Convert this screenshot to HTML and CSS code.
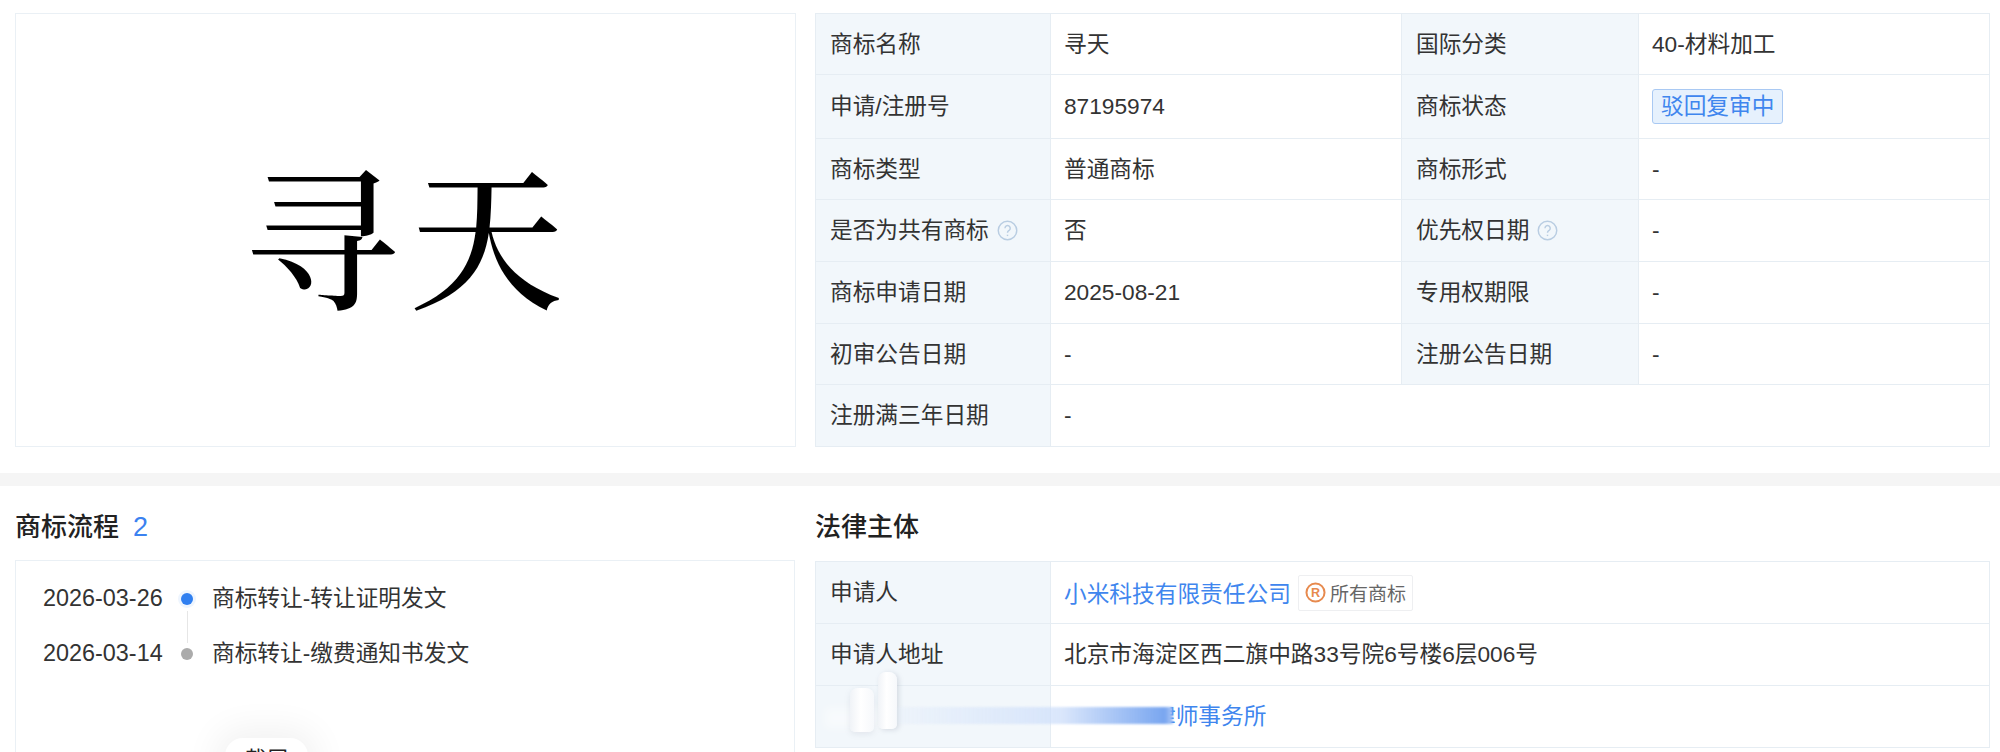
FILE: index.html
```html
<!DOCTYPE html>
<html lang="zh-CN">
<head>
<meta charset="utf-8">
<title>商标详情</title>
<link rel="stylesheet" href="styles.css">
</head>
<body>
<div class="page">
  <section class="top">
    <div class="logo-box"><span class="logo-text">寻天</span></div>
    <table class="info">
      <colgroup><col class="c-label"><col class="c-value"><col class="c-label2"><col></colgroup>
      <tr class="r-short"><th>商标名称</th><td>寻天</td><th>国际分类</th><td>40-材料加工</td></tr>
      <tr class="r-tall"><th>申请/注册号</th><td class="num">87195974</td><th>商标状态</th><td class="num"><span class="status">驳回复审中</span></td></tr>
      <tr class="r-short"><th>商标类型</th><td>普通商标</td><th>商标形式</th><td class="num">-</td></tr>
      <tr><th>是否为共有商标<svg class="help" viewBox="0 0 20 20"><circle cx="10" cy="10" r="8.8"/><path d="M7.6 7.8a2.5 2.5 0 1 1 3.9 2.1c-1 .6-1.5 1.1-1.5 2.3"/><path d="M10 14v1.3"/></svg></th><td>否</td><th>优先权日期<svg class="help" viewBox="0 0 20 20"><circle cx="10" cy="10" r="8.8"/><path d="M7.6 7.8a2.5 2.5 0 1 1 3.9 2.1c-1 .6-1.5 1.1-1.5 2.3"/><path d="M10 14v1.3"/></svg></th><td class="num">-</td></tr>
      <tr><th>商标申请日期</th><td class="num">2025-08-21</td><th>专用权期限</th><td class="num">-</td></tr>
      <tr class="r-short"><th>初审公告日期</th><td class="num">-</td><th>注册公告日期</th><td class="num">-</td></tr>
      <tr><th>注册满三年日期</th><td class="num" colspan="3">-</td></tr>
    </table>
  </section>

  <div class="band"></div>

  <section class="bottom">
    <div class="flow">
      <h2 class="title">商标流程<span class="count">2</span></h2>
      <div class="flow-box">
        <div class="step">
          <span class="date">2026-03-26</span><span class="dot dot-on"></span><span class="step-text">商标转让-转让证明发文</span>
        </div>
        <div class="step">
          <span class="date">2026-03-14</span><span class="dot"></span><span class="step-text">商标转让-缴费通知书发文</span>
        </div>
      </div>
    </div>
    <div class="legal">
      <h2 class="title">法律主体</h2>
      <table class="info">
        <colgroup><col class="c-label"><col></colgroup>
        <tr><th>申请人</th><td><span class="owner"><a class="link">小米科技有限责任公司</a><span class="all"><svg class="r-mark" viewBox="0 0 20 20"><circle cx="10" cy="10" r="8.6"/><text x="10" y="14.4" text-anchor="middle">R</text></svg>所有商标</span></span></td></tr>
        <tr><th>申请人地址</th><td>北京市海淀区西二旗中路33号院6号楼6层006号</td></tr>
        <tr><th></th><td><a class="link agent">律师事务所</a></td></tr>
      </table>
    </div>
  </section>

  <div class="veil">
    <span class="haze"></span>
    <span class="cyl cyl-a"></span>
    <span class="cyl cyl-b"></span>
    <span class="cover"></span>
    <span class="beam"></span>
  </div>
  <div class="shot">截屏</div>
</div>
</body>
</html>
```
FILE: styles.css
```css
* { box-sizing: border-box; }
html, body { margin: 0; height: 752px; overflow: hidden; background: #fff; }
body {
  font-family: "Liberation Sans", "Noto Sans CJK SC", sans-serif;
  font-size: 22.7px;
  color: #333;
}
.page { position: relative; width: 2000px; height: 752px; overflow: hidden; }

.top { display: flex; gap: 19px; padding: 13px 10px 0 15px; }
.logo-box {
  flex: 0 0 781px;
  height: 434px;
  border: 1px solid #eaf0f5;
  display: flex;
  align-items: center;
  justify-content: center;
  padding: 0 0 0 8px;
}
.logo-text {
  font-family: "Noto Serif CJK SC", "Noto Sans CJK SC", serif;
  font-size: 154px;
  font-weight: 500;
  line-height: 1;
  letter-spacing: 11px;
  color: #000;
  position: relative;
  top: 2px;
}

.info { flex: 1; width: 100%; border-collapse: collapse; table-layout: fixed; }
.info th, .info td {
  border: 1px solid #e6edf3;
  height: 62px;
  padding: 0 14px 4px;
  font-weight: 400;
  text-align: left;
  white-space: nowrap;
}
.info td { padding-left: 13px; }
.info td.num { padding-bottom: 0; }
.info th { background: #f2f7fb; color: #333; }
.info .r-short th, .info .r-short td { height: 61px; }
.info .r-tall th, .info .r-tall td { height: 64px; }
.c-label { width: 235px; }
.c-value { width: 351px; }
.c-label2 { width: 237px; }

.help {
  width: 21px;
  height: 21px;
  margin-left: 8px;
  vertical-align: -3px;
  fill: none;
  stroke: #b9cde2;
  stroke-width: 1.4;
}
.status {
  display: inline-block;
  height: 35px;
  line-height: 33px;
  padding: 0 8px;
  background: #e6f1fd;
  border: 1px solid #a9c9f3;
  border-radius: 3px;
  color: #3f86ee;
}

.band { height: 13px; margin-top: 26px; background: #f5f5f5; }

.bottom { display: flex; gap: 20px; padding: 0 10px 0 15px; }
.flow { flex: 0 0 780px; }
.legal { flex: 1; }
.title {
  margin: 0;
  padding-top: 23px;
  height: 74px;
  font-size: 26px;
  line-height: 36px;
  font-weight: 500;
  color: #222;
}
.count { margin-left: 14px; color: #3b82f0; font-size: 27px; font-weight: 500; }
.legal .title { height: 75px; }

.flow-box {
  height: 240px;
  border: 1px solid #eaf0f5;
  padding: 10px 0 0 27px;
}
.step { position: relative; display: flex; align-items: center; height: 55px; }
.date { flex: none; width: 119px; font-size: 23.4px; white-space: nowrap; }
.step-text { position: relative; top: -2px; white-space: nowrap; }
.dot {
  flex: none;
  width: 12px;
  height: 12px;
  margin: 0 19px 0 19px;
  border-radius: 50%;
  background: #ababab;
}
.dot-on { background: #2f7ff0; box-shadow: 0 0 0 3px #eef5fe; }
.step:first-child::after {
  content: "";
  position: absolute;
  left: 144px;
  top: 40px;
  width: 1px;
  height: 32px;
  background: #e6e6e6;
}

.link { color: #3f86ee; text-decoration: none; }
.owner { display: flex; align-items: center; position: relative; top: 2px; }
.all {
  display: inline-flex;
  align-items: center;
  height: 36px;
  margin-left: 7px;
  padding: 0 6px;
  border: 1px solid #eeeff1;
  border-radius: 2px;
  font-size: 19px;
  color: #666;
}
.r-mark { width: 21px; height: 21px; margin-right: 4px; fill: none; stroke: #e78a4e; stroke-width: 1.9; }
.r-mark text {
  fill: #e78a4e;
  stroke: none;
  font-family: "Liberation Sans", sans-serif;
  font-size: 12px;
  font-weight: 700;
}
.agent { display: block; padding-left: 89px; }

.veil { position: absolute; left: 815px; top: 672px; width: 358px; height: 72px; }
.veil span { position: absolute; display: block; }
.haze {
  left: 10px; top: 36px; width: 60px; height: 20px;
  background: rgba(255,255,255,.45);
  filter: blur(5px);
}
.cyl { background: linear-gradient(90deg, #f0f3f7, #fff 45%, #f6f8fb); border-radius: 8px 8px 5px 5px; }
.cyl-a { left: 35px; top: 16px; width: 24px; height: 44px; box-shadow: 0 2px 6px rgba(120,130,150,.14); }
.cyl-b { left: 63px; top: 0; width: 19px; height: 57px; box-shadow: 2px 1px 5px rgba(110,120,140,.22); }
.cover { left: 322px; top: 26px; width: 34px; height: 40px; background: #fff; filter: blur(1px); }
.beam {
  left: 82px; top: 35px; width: 276px; height: 17px;
  background: linear-gradient(90deg, rgba(225,235,250,.25), rgba(205,222,250,.75) 60%, #79a6f0 97%, rgba(121,166,240,.6));
  filter: blur(.8px);
}
.shot {
  position: absolute;
  left: 225px;
  top: 738px;
  width: 83px;
  height: 48px;
  border-radius: 18px;
  background: #fff;
  box-shadow: 0 0 34px 10px rgba(0,0,0,.055);
  font-size: 22px;
  line-height: 34px;
  padding-top: 5px;
  text-align: center;
  color: #222;
}
```
